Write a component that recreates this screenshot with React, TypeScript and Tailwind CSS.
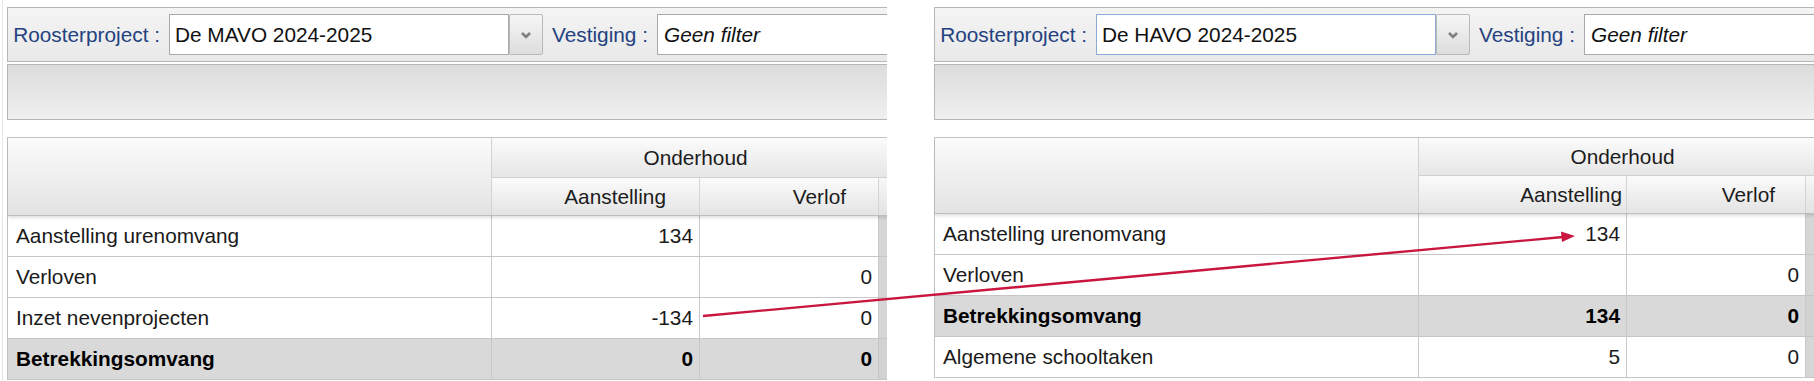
const font = "font-['Liberation_Sans',Arial,sans-serif]"

type Row = { label: string; a: string; v: string; total?: boolean }

function FilterBar({ project, focused }: { project: string; focused?: boolean }) {
  return (
    <div className="w-[900px] h-[55px] border border-[#b6b6b6] bg-gradient-to-b from-[#f4f4f4] to-[#e9e9e9] flex items-center">
      <div className="shrink-0 w-[152px] text-right text-[#24427f] whitespace-nowrap">Roosterproject :</div>
      <div
        className={`shrink-0 ml-[9px] w-[340px] h-[41px] bg-white border flex items-center pl-[5px] text-[#111] ${
          focused ? "border-[#8eaad8]" : "border-[#a9a9a9]"
        }`}
      >
        {project}
      </div>
      <div className="shrink-0 w-[34px] h-[41px] border border-[#b9b9b9] rounded-[2px] bg-gradient-to-b from-[#f6f6f6] to-[#dddddd] flex items-center justify-center">
        <svg width="12" height="8" viewBox="0 0 12 8">
          <polyline points="2,2 6,6 10,2" fill="none" stroke="#808080" strokeWidth="2.6" />
        </svg>
      </div>
      <div className="shrink-0 w-[114px] pl-[9px] text-[#24427f] whitespace-nowrap">Vestiging :</div>
      <div className="shrink-0 w-[400px] h-[41px] bg-white border border-[#a9a9a9] flex items-center pl-[6px] italic text-[#111]">
        Geen filter
      </div>
    </div>
  )
}

function DataTable({
  rows,
  topH,
  aPad,
  vPad,
}: {
  rows: Row[]
  topH: string
  aPad: string
  vPad: string
}) {
  return (
    <div className="w-[900px] border-l border-t border-[#c2c2c2]">
      <div className="flex border-b border-[#bdbdbd] shadow-[0_2px_3px_rgba(0,0,0,0.12)] relative">
        <div className="shrink-0 w-[484px] border-r border-[#d2d2d2] bg-gradient-to-b from-[#fbfbfb] to-[#e3e3e3]" />
        <div className="flex-1 flex flex-col">
          <div
            className={`${topH} w-[407px] flex items-center justify-center border-b border-[#d0d0d0] bg-gradient-to-b from-[#fbfbfb] to-[#e6e6e6] text-[#1c1c1c]`}
          >
            Onderhoud
          </div>
          <div className="h-[37px] flex">
            <div
              className={`shrink-0 w-[208px] flex items-center justify-end ${aPad} border-r border-[#d4d4d4] bg-gradient-to-b from-[#fbfbfb] to-[#e4e4e4] text-[#1c1c1c]`}
            >
              Aanstelling
            </div>
            <div
              className={`shrink-0 w-[179px] flex items-center justify-end ${vPad} border-r border-[#d4d4d4] bg-gradient-to-b from-[#fbfbfb] to-[#e4e4e4] text-[#1c1c1c]`}
            >
              Verlof
            </div>
            <div className="flex-1 bg-gradient-to-b from-[#f7f7f7] to-[#e2e2e2]" />
          </div>
        </div>
      </div>
      {rows.map((r) => (
        <div
          key={r.label}
          className={`flex h-[41px] border-b border-[#c6c6c6] text-[#1a1a1a] ${
            r.total ? "bg-[#d9d9d9] font-bold text-black" : "bg-white"
          }`}
        >
          <div className="shrink-0 w-[484px] border-r border-[#c8c8c8] flex items-center pl-[8px] whitespace-nowrap">{r.label}</div>
          <div className="shrink-0 w-[208px] border-r border-[#c8c8c8] flex items-center justify-end pr-[6px]">{r.a}</div>
          <div className="shrink-0 w-[179px] border-r border-[#c8c8c8] flex items-center justify-end pr-[6px]">{r.v}</div>
          <div className={`flex-1 ${r.total ? "bg-[#d2d2d2]" : "bg-[#d6d6d6]"}`} />
        </div>
      ))}
    </div>
  )
}

function Panel({
  project,
  focused,
  rows,
  topH,
  aPad,
  vPad,
  className,
}: {
  project: string
  focused?: boolean
  rows: Row[]
  topH: string
  aPad: string
  vPad: string
  className: string
}) {
  return (
    <div className={`${className} overflow-hidden pt-[7px]`}>
      <FilterBar project={project} focused={focused} />
      <div className="mt-[2px] w-[900px] h-[56px] border border-[#b6b6b6] bg-gradient-to-b from-[#dcdcdc] to-[#f0f0f0]" />
      <div className="mt-[17px]">
        <DataTable rows={rows} topH={topH} aPad={aPad} vPad={vPad} />
      </div>
    </div>
  )
}

export default function App() {
  const left: Row[] = [
    { label: "Aanstelling urenomvang", a: "134", v: "" },
    { label: "Verloven", a: "", v: "0" },
    { label: "Inzet nevenprojecten", a: "-134", v: "0" },
    { label: "Betrekkingsomvang", a: "0", v: "0", total: true },
  ]
  const right: Row[] = [
    { label: "Aanstelling urenomvang", a: "134", v: "" },
    { label: "Verloven", a: "", v: "0" },
    { label: "Betrekkingsomvang", a: "134", v: "0", total: true },
    { label: "Algemene schooltaken", a: "5", v: "0" },
  ]

  return (
    <div className={`${font} text-[20.8px] relative w-[1814px] h-[381px] overflow-hidden bg-white flex pl-[2px]`}>
      <div className="shrink-0 w-[1px] bg-[#e6e6e6]" />
      <Panel
        className="shrink-0 ml-[4px] w-[880px]"
        project="De MAVO 2024-2025"
        rows={left}
        topH="h-[40px]"
        aPad="pr-[33px]"
        vPad="pr-[32px]"
      />
      <Panel
        className="ml-[47px] flex-1 min-w-0"
        project="De HAVO 2024-2025"
        focused
        rows={right}
        topH="h-[38px]"
        aPad="pr-[4px]"
        vPad="pr-[30px]"
      />
      <svg className="absolute inset-0 pointer-events-none" width="1814" height="381" viewBox="0 0 1814 381">
        <line x1="703" y1="316" x2="1563" y2="237" stroke="#c8163f" strokeWidth="2.4" />
        <polygon points="1575,236 1561,231.5 1562,242" fill="#c8163f" />
      </svg>
    </div>
  )
}
